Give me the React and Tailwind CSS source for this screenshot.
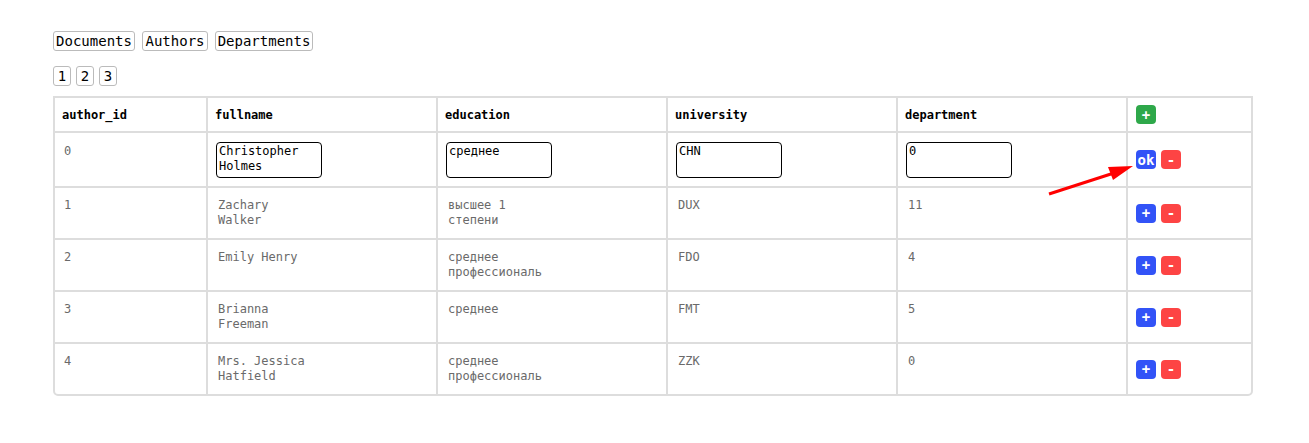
import React from 'react';

const COLS = ['author_id', 'fullname', 'education', 'university', 'department'];

const NAV = [
  { label: 'Documents', w: 'w-[82px]' },
  { label: 'Authors', w: 'w-[66px]' },
  { label: 'Departments', w: 'w-[98px]' },
];

const ROWS = [
  { fullname: 'Zachary Walker', education: 'высшее 1 степени', university: 'DUX', department: '11' },
  { fullname: 'Emily Henry', education: 'среднее профессиональное', university: 'FDO', department: '4' },
  { fullname: 'Brianna Freeman', education: 'среднее', university: 'FMT', department: '5' },
  { fullname: 'Mrs. Jessica Hatfield', education: 'среднее профессиональное', university: 'ZZK', department: '0' },
];

const EDIT = { id: '0', fullname: 'Christopher Holmes', education: 'среднее', university: 'CHN', department: '0' };

function Btn({ color, children }) {
  return (
    <button className={`w-[20px] h-[19px] rounded-[4px] flex items-center justify-center text-white font-bold text-[14px] leading-none ${color}`}>
      {children}
    </button>
  );
}

// read-only cell text, same box as the textarea
function TextBox({ children }) {
  return (
    <div className="w-[100px] h-[36px] p-[2px] overflow-hidden text-[12px] leading-[15px] text-[#6a6a6a] [overflow-wrap:anywhere]">
      {children}
    </div>
  );
}

function EditBox({ value }) {
  return (
    <textarea
      defaultValue={value}
      className="block w-[106px] h-[36px] px-[2px] py-[1px] border border-black rounded-[4px] resize-none text-[12px] leading-[15px] text-black font-['DejaVu_Sans_Mono',monospace] outline-none overflow-hidden"
    />
  );
}

export default function App() {
  const cell = 'bg-white';
  return (
    <div className="relative min-h-[443px] bg-white pl-[53px] pt-[31px] font-['DejaVu_Sans_Mono',monospace]">
      {/* Nav */}
      <div className="flex gap-[7px]">
        {NAV.map(n => (
          <button key={n.label} className={`${n.w} h-[20px] border border-[#bbb] rounded-[3px] bg-white text-[14px] leading-[18px] text-black text-center`}>{n.label}</button>
        ))}
      </div>

      {/* Pages */}
      <div className="flex gap-[5px] mt-[15px]">
        {['1', '2', '3'].map(p => (
          <button key={p} className="w-[18px] h-[20px] border border-[#bbb] rounded-[3px] bg-white text-[14px] leading-[18px] text-black">{p}</button>
        ))}
      </div>

      {/* Table */}
      <div className="mt-[10px] w-[1200px] grid grid-cols-[151px_228px_228px_228px_228px_123px] grid-rows-[33px_53px_50px_50px_50px_50px] gap-[2px] bg-[#ddd] border-2 border-[#ddd] rounded-b-[5px] overflow-hidden">
        {COLS.map(c => (
          <div key={c} className={`${cell} pl-[7px] flex items-center text-[12px] font-bold text-black`}>{c}</div>
        ))}
        <div className={`${cell} pl-[8px] flex items-center`}>
          <Btn color="bg-[#2ea84a]">+</Btn>
        </div>

        {/* editing row */}
        <div className={`${cell} pl-[7px] pt-[9px]`}><TextBox>{EDIT.id}</TextBox></div>
        <div className={`${cell} pl-[8px] pt-[9px]`}><EditBox value={EDIT.fullname} /></div>
        <div className={`${cell} pl-[8px] pt-[9px]`}><EditBox value={EDIT.education} /></div>
        <div className={`${cell} pl-[8px] pt-[9px]`}><EditBox value={EDIT.university} /></div>
        <div className={`${cell} pl-[8px] pt-[9px]`}><EditBox value={EDIT.department} /></div>
        <div className={`${cell} pl-[8px] flex items-center gap-[5px]`}>
          <Btn color="bg-[#3253f7]">ok</Btn>
          <Btn color="bg-[#fd4444]">-</Btn>
        </div>

        {ROWS.map((r, i) => (
          <React.Fragment key={i}>
            <div className={`${cell} pl-[7px] pt-[8px]`}><TextBox>{String(i + 1)}</TextBox></div>
            <div className={`${cell} pl-[8px] pt-[8px]`}><TextBox>{r.fullname}</TextBox></div>
            <div className={`${cell} pl-[8px] pt-[8px]`}><TextBox>{r.education}</TextBox></div>
            <div className={`${cell} pl-[8px] pt-[8px]`}><TextBox>{r.university}</TextBox></div>
            <div className={`${cell} pl-[8px] pt-[8px]`}><TextBox>{r.department}</TextBox></div>
            <div className={`${cell} pl-[8px] flex items-center gap-[5px]`}>
              <Btn color="bg-[#3253f7]">+</Btn>
              <Btn color="bg-[#fd4444]">-</Btn>
            </div>
          </React.Fragment>
        ))}
      </div>

      {/* annotation arrow */}
      <svg className="absolute left-0 top-0 pointer-events-none" width="1309" height="443">
        <line x1="1049" y1="194" x2="1114" y2="173" stroke="#f00" strokeWidth="3" />
        <polygon points="1133,166 1113,180 1108,167" fill="#f00" />
      </svg>
    </div>
  );
}
